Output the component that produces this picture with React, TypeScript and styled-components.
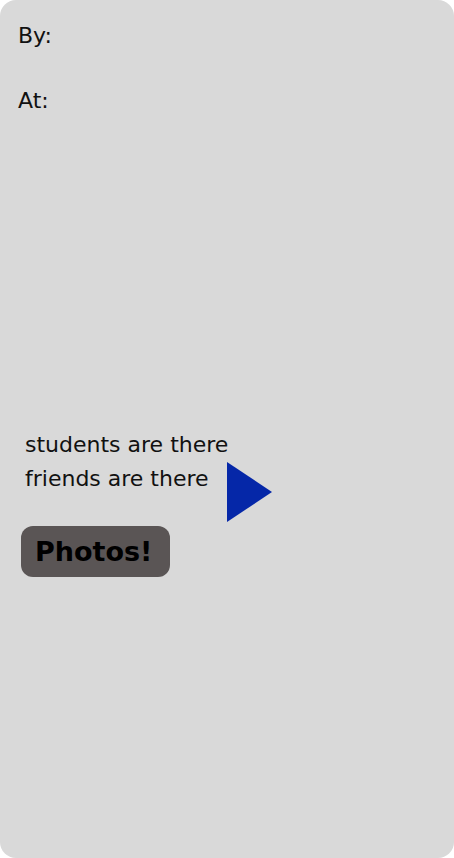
import React from "react";
import styled, { createGlobalStyle } from "styled-components";

const Global = createGlobalStyle`
  html, body { margin: 0; padding: 0; background: #ffffff; }
  body { font-family: "DejaVu Sans", sans-serif; }
`;

const Card = styled.div`
  box-sizing: border-box;
  width: 454px;
  height: 858px;
  background: #d9d9d9;
  border-radius: 16px;
  padding: 23px 18px 0 18px;
  display: flex;
  flex-direction: column;
`;

const Label = styled.div<{ $gap?: number }>`
  font-size: 22px;
  line-height: 26px;
  color: #111;
  margin-bottom: ${(p) => p.$gap ?? 0}px;
`;

const Info = styled.div`
  margin-top: 314px;
  display: flex;
  align-items: flex-start;
  padding-left: 7px;
`;

const Lines = styled.div`
  display: flex;
  flex-direction: column;
`;

const Line = styled.div`
  font-size: 22px;
  line-height: 34px;
  color: #111;
  white-space: nowrap;
`;

const Arrow = styled.svg`
  margin-top: 34px;
  margin-left: -1px;
  flex: none;
`;

const PhotoButton = styled.button`
  margin-top: 4px;
  margin-left: 3px;
  width: 149px;
  height: 51px;
  box-sizing: border-box;
  border: none;
  border-radius: 12px;
  background: #5a5555;
  color: #000;
  font-family: "DejaVu Sans", sans-serif;
  font-size: 27px;
  font-weight: bold;
  padding: 0 0 0 14px;
  text-align: left;
  cursor: pointer;
`;

export default function App() {
  return (
    <>
      <Global />
      <Card>
        <Label $gap={39}>By:</Label>
        <Label>At:</Label>
        <Info>
          <Lines>
            <Line>students are there</Line>
            <Line>friends are there</Line>
          </Lines>
          <Arrow width="46" height="60" viewBox="0 0 46 60">
            <polygon points="0,0 45,30 0,60" fill="#0527a8" />
          </Arrow>
        </Info>
        <PhotoButton>Photos!</PhotoButton>
      </Card>
    </>
  );
}
